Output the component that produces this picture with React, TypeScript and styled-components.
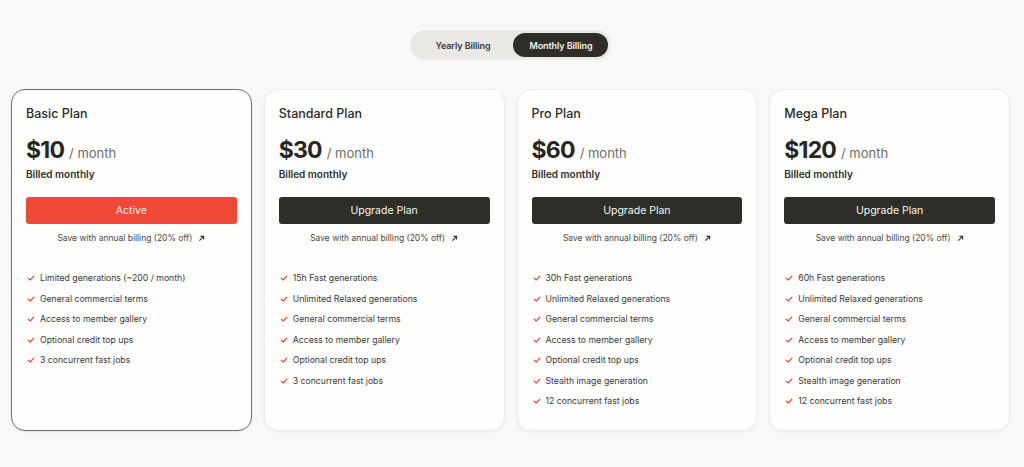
import { useState } from "react"
import styled, { createGlobalStyle } from "styled-components"

type Billing = "yearly" | "monthly"

type Plan = {
  name: string
  price: number
  features: string[]
}

const plans: Plan[] = [
  {
    name: "Basic Plan",
    price: 10,
    features: [
      "Limited generations (~200 / month)",
      "General commercial terms",
      "Access to member gallery",
      "Optional credit top ups",
      "3 concurrent fast jobs",
    ],
  },
  {
    name: "Standard Plan",
    price: 30,
    features: [
      "15h Fast generations",
      "Unlimited Relaxed generations",
      "General commercial terms",
      "Access to member gallery",
      "Optional credit top ups",
      "3 concurrent fast jobs",
    ],
  },
  {
    name: "Pro Plan",
    price: 60,
    features: [
      "30h Fast generations",
      "Unlimited Relaxed generations",
      "General commercial terms",
      "Access to member gallery",
      "Optional credit top ups",
      "Stealth image generation",
      "12 concurrent fast jobs",
    ],
  },
  {
    name: "Mega Plan",
    price: 120,
    features: [
      "60h Fast generations",
      "Unlimited Relaxed generations",
      "General commercial terms",
      "Access to member gallery",
      "Optional credit top ups",
      "Stealth image generation",
      "12 concurrent fast jobs",
    ],
  },
]

export default function App() {
  const [billing, setBilling] = useState<Billing>("monthly")
  const [active] = useState("Basic Plan")

  return (
    <>
      <GlobalStyle />
      <Page>
        <Toggle>
          <ToggleOption selected={billing === "yearly"} onClick={() => setBilling("yearly")}>
            Yearly Billing
          </ToggleOption>
          <ToggleOption selected={billing === "monthly"} onClick={() => setBilling("monthly")}>
            Monthly Billing
          </ToggleOption>
        </Toggle>
        <Grid>
          {plans.map(plan => {
            const isActive = plan.name === active
            return (
              <Card key={plan.name} active={isActive}>
                <PlanName>{plan.name}</PlanName>
                <PriceRow>
                  <Price>${plan.price}</Price>
                  <Period>/ month</Period>
                </PriceRow>
                <Billed>Billed monthly</Billed>
                <PlanButton active={isActive}>{isActive ? "Active" : "Upgrade Plan"}</PlanButton>
                <SaveLink>
                  Save with annual billing (20% off)
                  <svg width="7" height="7" viewBox="0 0 10 10" fill="none">
                    <path d="M2 8L8 2M3.5 2H8V6.5" stroke="#333" strokeWidth="1.6" />
                  </svg>
                </SaveLink>
                <Features>
                  {plan.features.map(f => (
                    <Feature key={f}>
                      <svg width="8" height="8" viewBox="0 0 10 10" fill="none">
                        <path d="M1.5 5.2L4 7.5L8.6 2.6" stroke="#e5433a" strokeWidth="1.4" strokeLinecap="round" strokeLinejoin="round" />
                      </svg>
                      {f}
                    </Feature>
                  ))}
                </Features>
              </Card>
            )
          })}
        </Grid>
      </Page>
    </>
  )
}

const GlobalStyle = createGlobalStyle`
  body {
    margin: 0;
    background: #f9f8f6;
    font-family: Inter, "Noto Sans", sans-serif;
    color: #2b2b2b;
  }
`

const Page = styled.div`
  display: flex;
  flex-direction: column;
  align-items: center;
  padding: 30px 14px 0 11px;
  height: 467px;
  box-sizing: border-box;
`

const Toggle = styled.div`
  display: flex;
  align-items: center;
  padding: 2px;
  background: #e9e8e4;
  border-radius: 14px;
  border: 1px solid #f0efeb;
  margin-bottom: 29px;
`

const ToggleOption = styled.button<{ selected: boolean }>`
  border: none;
  cursor: pointer;
  font-family: inherit;
  font-size: 9px;
  font-weight: 600;
  height: 24px;
  padding: 0 ${({ selected }) => (selected ? "16px" : "23px")};
  border-radius: 12px;
  background: ${({ selected }) => (selected ? "#2d2e27" : "transparent")};
  color: ${({ selected }) => (selected ? "#f3f3f0" : "#3a3a36")};
  letter-spacing: -0.1px;
`

const Grid = styled.div`
  display: grid;
  grid-template-columns: repeat(4, 1fr);
  gap: 12px;
  width: 100%;
`

const Card = styled.div<{ active: boolean }>`
  height: 342px;
  box-sizing: border-box;
  padding: 16px 14px 0 14px;
  border-radius: 14px;
  background: #fdfdfc;
  border: 1px solid ${({ active }) => (active ? "#6f6f6c" : "#efeeea")};
  box-shadow: ${({ active }) => (active ? "0 1px 2px rgba(0,0,0,0.08)" : "0 1px 3px rgba(0,0,0,0.05)")};
  display: flex;
  flex-direction: column;
`

const PlanName = styled.div`
  font-size: 12.5px;
  font-weight: 500;
  color: #2b2b29;
`

const PriceRow = styled.div`
  display: flex;
  align-items: baseline;
  gap: 5px;
  margin-top: 15px;
`

const Price = styled.span`
  font-size: 23px;
  font-weight: 700;
  letter-spacing: -0.8px;
  color: #262623;
`

const Period = styled.span`
  font-size: 13px;
  color: #6e6e6a;
`

const Billed = styled.div`
  font-size: 10px;
  font-weight: 600;
  color: #2f2f2c;
  margin-top: 4px;
`

const PlanButton = styled.button<{ active: boolean }>`
  margin-top: 17px;
  height: 27px;
  border: none;
  border-radius: 3px;
  font-family: inherit;
  font-size: 10.5px;
  font-weight: 400;
  color: #f7f7f4;
  background: ${({ active }) => (active ? "#f04836" : "#2d2e27")};
  cursor: pointer;
`

const SaveLink = styled.div`
  display: flex;
  align-items: center;
  justify-content: center;
  gap: 6px;
  margin-top: 9px;
  font-size: 8.5px;
  color: #4a4a47;
`

const Features = styled.ul`
  list-style: none;
  margin: 30px 0 0;
  padding: 0 0 0 1px;
  display: flex;
  flex-direction: column;
  gap: 10.5px;
`

const Feature = styled.li`
  display: flex;
  align-items: center;
  gap: 5px;
  font-size: 8.7px;
  color: #3a3a37;
  line-height: 10px;
`
